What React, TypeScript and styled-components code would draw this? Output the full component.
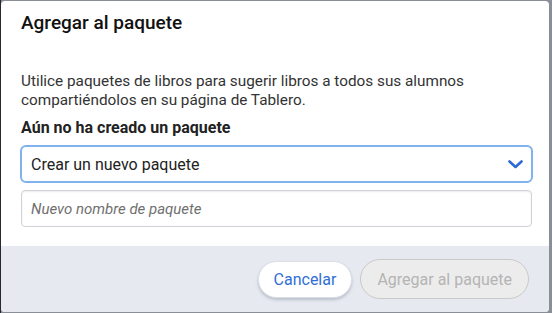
import React, { useState } from "react";
import styled, { createGlobalStyle } from "styled-components";

const GlobalStyle = createGlobalStyle`
  html, body {
    margin: 0;
    height: 100%;
    background: #8a8e96;
    font-family: Roboto, "Liberation Sans", sans-serif;
  }
  #root {
    height: 100%;
  }
`;

const Backdrop = styled.div`
  height: 100%;
  box-sizing: border-box;
  padding: 1px 3px 1px 0;
  border-left: 1px solid #2b2630;
  display: flex;
`;

const Dialog = styled.div`
  flex: 1;
  display: flex;
  flex-direction: column;
  background: #fff;
  border-radius: 4px;
  overflow: hidden;
`;

const Header = styled.div`
  padding: 10px 20px 17px;
`;

const Title = styled.h2`
  margin: 0;
  font-size: 19px;
  line-height: 24px;
  font-weight: 500;
  color: #111;
`;

const Body = styled.div`
  padding: 20px 17px 19px 20px;
`;

const Intro = styled.p`
  margin: 0;
  font-size: 15.3px;
  line-height: 19px;
  color: #333;
`;

const Label = styled.div`
  margin-top: 8px;
  font-size: 16px;
  line-height: 19px;
  font-weight: 700;
  color: #222;
`;

const SelectBox = styled.div`
  margin: 8px -1px 0;
  height: 38px;
  box-sizing: border-box;
  border: 2px solid #7fb3f0;
  border-radius: 6px;
  padding: 0 8px 0 9px;
  display: flex;
  align-items: center;
  justify-content: space-between;
  font-size: 16px;
  color: #222;
`;

const NameInput = styled.input`
  display: block;
  width: 100%;
  margin-top: 7px;
  height: 37px;
  box-sizing: border-box;
  border: 1px solid #cfd2d8;
  border-radius: 4px;
  box-shadow: inset 0 1px 2px rgba(0, 0, 0, 0.08);
  padding: 0 9px;
  font-family: Roboto, "Liberation Sans", sans-serif;
  font-size: 15px;
  color: #222;
  outline: none;

  &::placeholder {
    font-style: italic;
    color: #707070;
  }
`;

const Footer = styled.div`
  flex: 1;
  background: #e6e9f0;
  display: flex;
  align-items: center;
  justify-content: flex-end;
  gap: 8px;
  padding: 0 20px;
`;

const Button = styled.button<{ $disabled?: boolean }>`
  font-family: Roboto, "Liberation Sans", sans-serif;
  font-size: 16px;
  border-radius: 20px;
  cursor: pointer;
  box-sizing: border-box;
  height: ${(p) => (p.$disabled ? "40px" : "37px")};
  padding: 0 ${(p) => (p.$disabled ? "16px" : "15px")};
  background: ${(p) => (p.$disabled ? "#ececec" : "#fff")};
  color: ${(p) => (p.$disabled ? "#b4b4b4" : "#2f6fd6")};
  border: 1px solid ${(p) => (p.$disabled ? "#c9c9c9" : "#dcdfe6")};
  box-shadow: ${(p) =>
    p.$disabled ? "none" : "0 2px 3px rgba(60, 70, 100, 0.25)"};
`;

const Chevron = () => (
  <svg width="15" height="9" viewBox="0 0 15 9" fill="none">
    <path
      d="M1.5 1.5 L7.5 7 L13.5 1.5"
      stroke="#2c6bd6"
      strokeWidth="2.6"
      strokeLinecap="round"
      strokeLinejoin="round"
    />
  </svg>
);

const App = () => {
  const [name, setName] = useState("");

  return (
    <>
      <GlobalStyle />
      <Backdrop>
        <Dialog>
          <Header>
            <Title>Agregar al paquete</Title>
          </Header>
          <Body>
            <Intro>
              Utilice paquetes de libros para sugerir libros a todos sus alumnos
              compartiéndolos en su página de Tablero.
            </Intro>
            <Label>Aún no ha creado un paquete</Label>
            <SelectBox>
              <span>Crear un nuevo paquete</span>
              <Chevron />
            </SelectBox>
            <NameInput
              placeholder="Nuevo nombre de paquete"
              value={name}
              onChange={(e) => setName(e.target.value)}
            />
          </Body>
          <Footer>
            <Button>Cancelar</Button>
            <Button $disabled disabled>
              Agregar al paquete
            </Button>
          </Footer>
        </Dialog>
      </Backdrop>
    </>
  );
};

export default App;
